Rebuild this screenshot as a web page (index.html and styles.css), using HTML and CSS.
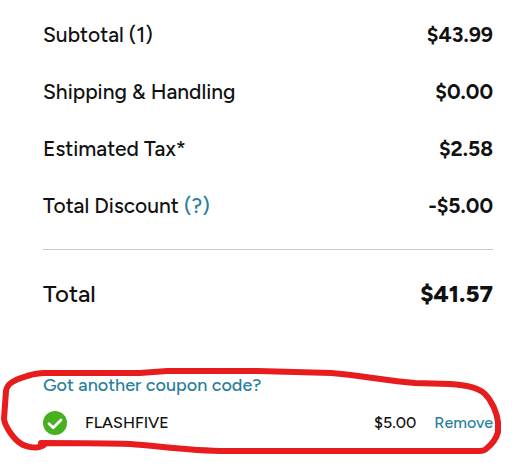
FILE: index.html
```html
<!DOCTYPE html>
<html lang="en">

<head>
    <meta charset="UTF-8">
    <meta name="viewport" content="width=device-width, initial-scale=1.0">
    <title>Order Summary</title>
    <link rel="stylesheet" href="styles.css">
</head>

<body>
    <main class="summary">
        <dl class="costs">
            <div class="row">
                <dt>Subtotal (1)</dt>
                <dd>$43.99</dd>
            </div>
            <div class="row">
                <dt>Shipping &amp; Handling</dt>
                <dd>$0.00</dd>
            </div>
            <div class="row">
                <dt>Estimated Tax*</dt>
                <dd>$2.58</dd>
            </div>
            <div class="row">
                <dt>Total Discount <a class="link" href="#discount">(?)</a></dt>
                <dd>-$5.00</dd>
            </div>
        </dl>

        <div class="row total">
            <span>Total</span>
            <strong>$41.57</strong>
        </div>

        <section class="coupons">
            <a class="link" href="#coupon">Got another coupon code?</a>
            <div class="coupon">
                <svg class="check" viewBox="0 0 24 24" aria-hidden="true">
                    <circle cx="12" cy="12" r="12" fill="#46b020" />
                    <path d="M6 12.7l4.2 4L18 9" fill="none" stroke="#fff" stroke-width="2.8" stroke-linecap="round" stroke-linejoin="round" />
                </svg>
                <span class="code">FLASHFIVE</span>
                <span>$5.00</span>
                <button type="button" class="link remove">Remove</button>
            </div>

            <!-- hand drawn ring around the coupon -->
            <svg class="ring" viewBox="0 0 518 92" preserveAspectRatio="none" aria-hidden="true">
                <path d="M44 78C39 82 27 81 20 76C14 72 5 60 4 52L6 24C7 15 18 12 27 9C34 7 39 6 44 6L140 6L167 4L258 4L331 6C360 8 386 14 415 16L450 17C466 18 479 21 485 27C492 34 497 46 498 55V65C496 73 491 78 486 82C484 84 482 84 479 84H227C187 84 160 79 130 77C105 76 85 76 41 76" />
            </svg>
        </section>
    </main>
</body>

</html>
```
FILE: styles.css
```css
* {
    margin: 0;
    padding: 0;
    box-sizing: border-box;
}

body {
    font-family: Figtree, Lato, sans-serif;
    font-size: 21px;
    font-weight: 500;
    line-height: 27px;
    color: #111;
    background-color: #fff;
}

.summary {
    padding: 6px 25px 37px 43px;
}

.costs {
    padding-bottom: 15px;
    border-bottom: 1px solid #c8c8c8;
}

.row {
    display: flex;
    justify-content: space-between;
    padding: 15px 0;
}

.row dd {
    font-weight: bold;
}

.total {
    padding: 30px 0;
    font-size: 24px;
}

.total strong {
    font-weight: 800;
}

.link {
    color: #2a7f9b;
    text-decoration: none;
}

.coupons {
    position: relative;
    padding-top: 36px;
    font-size: 18px;
    line-height: 24px;
}

.coupon {
    display: flex;
    align-items: center;
    gap: 18px;
    margin-top: 14px;
    font-size: 16px;
}

.check {
    width: 24px;
    height: 24px;
}

.code {
    flex: 1;
}

.remove {
    font: inherit;
    background: none;
    border: none;
    cursor: pointer;
}

.ring {
    position: absolute;
    left: -43px;
    bottom: -24px;
    width: calc(100% + 68px);
    height: 92px;
    pointer-events: none;
}

.ring path {
    fill: none;
    stroke: #e71d1d;
    stroke-width: 6;
    stroke-linejoin: round;
    stroke-linecap: round;
    vector-effect: non-scaling-stroke;
}
```
